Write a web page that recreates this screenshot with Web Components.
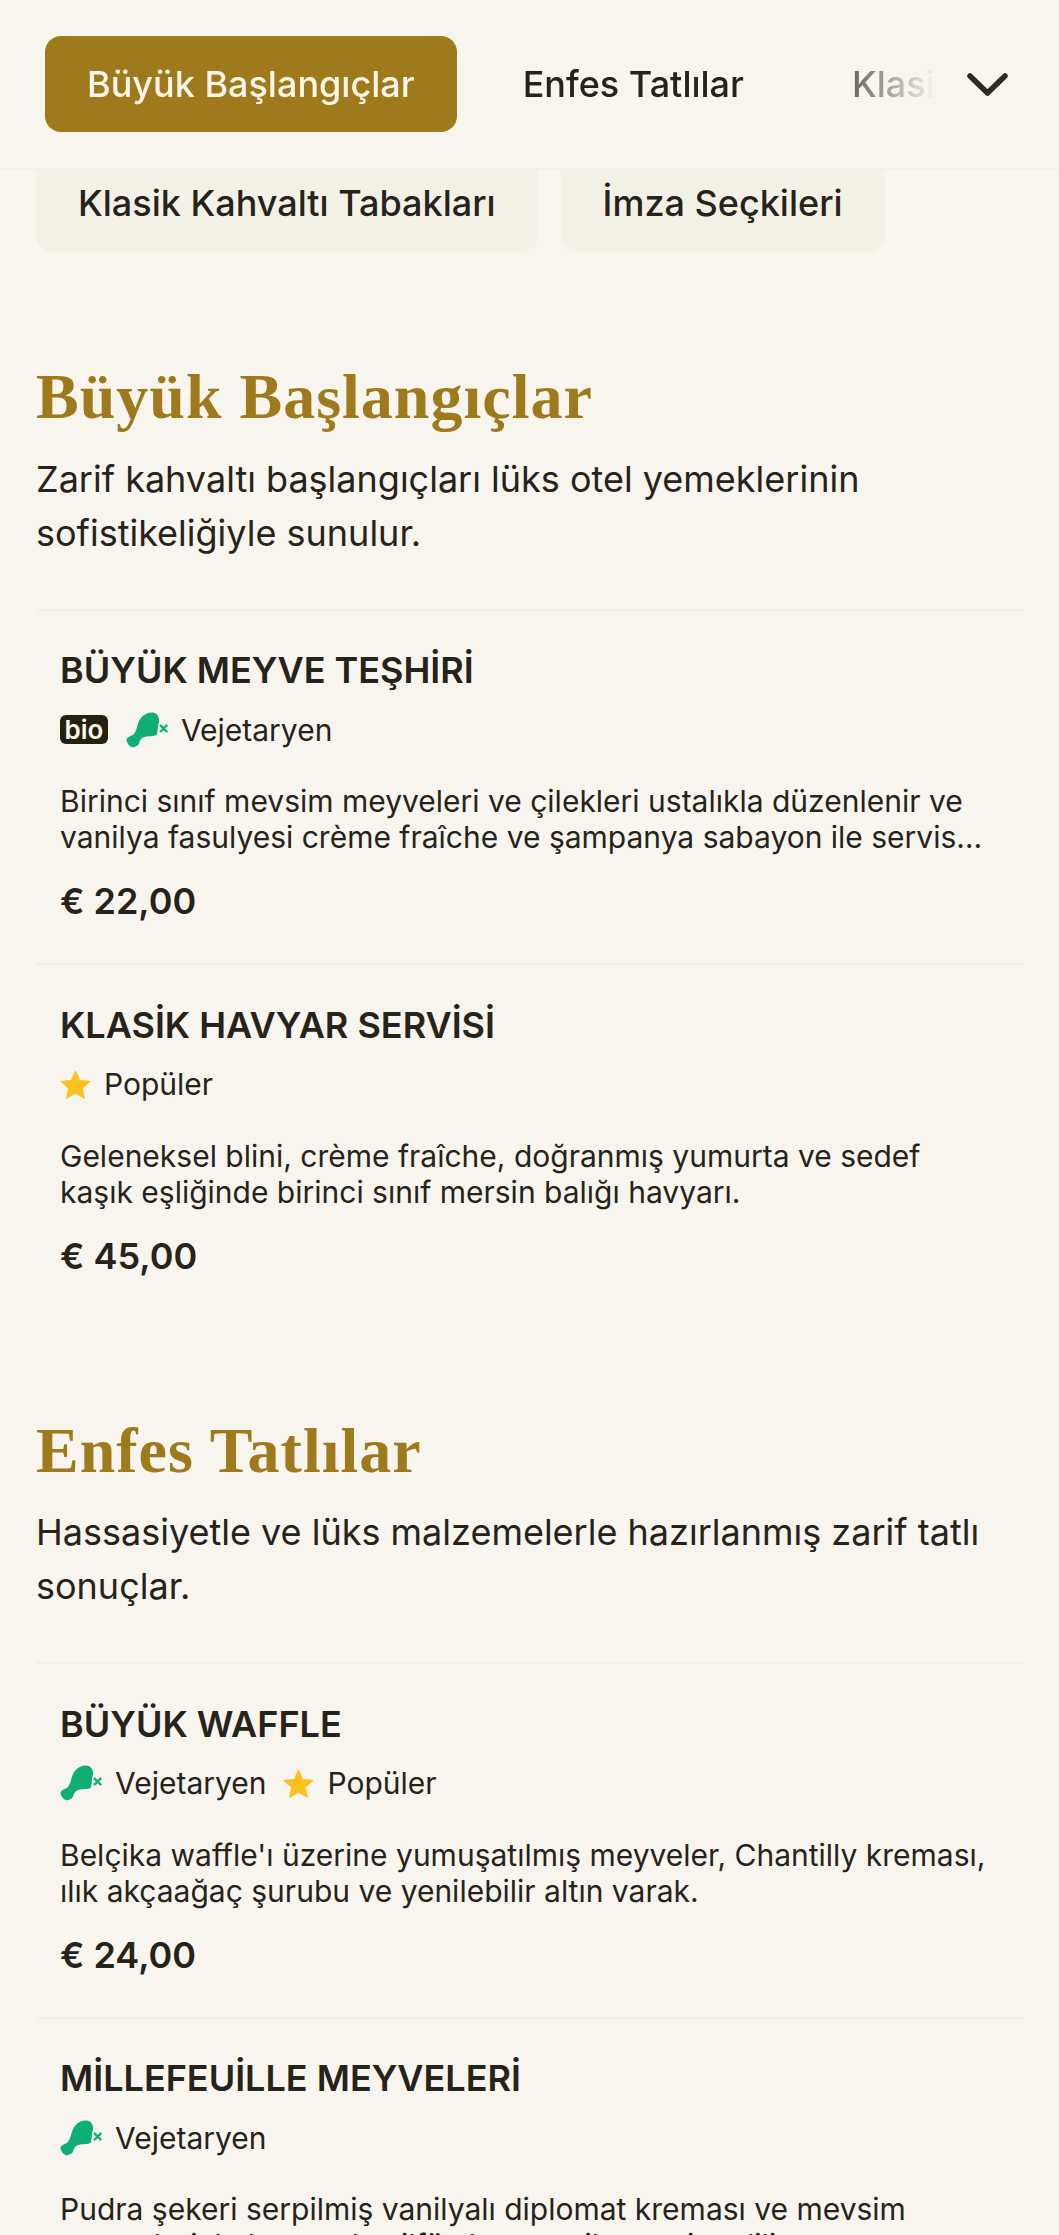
<!DOCTYPE html>
<html lang="tr"><head><meta charset="utf-8"><title>Menu</title>
<style>
html,body{margin:0;padding:0;background:#f8f5ee;}
body{font-family:Inter,"Noto Sans",sans-serif;color:#26231a;overflow-x:hidden;}
</style></head><body>
<menu-header>
  <menu-tab active>Büyük Başlangıçlar</menu-tab>
  <menu-tab>Enfes Tatlılar</menu-tab>
  <menu-tab>Klasik Kahvaltı Tabakları</menu-tab>
</menu-header>
<chip-row>
  <cat-chip>Klasik Kahvaltı Tabakları</cat-chip>
  <cat-chip>İmza Seçkileri</cat-chip>
</chip-row>
<menu-section heading="Büyük Başlangıçlar" intro="Zarif kahvaltı başlangıçları lüks otel yemeklerinin sofistikeliğiyle sunulur.">
  <menu-item name="BÜYÜK MEYVE TEŞHİRİ" price="€ 22,00" desc="Birinci sınıf mevsim meyveleri ve çilekleri ustalıkla düzenlenir ve vanilya fasulyesi crème fraîche ve şampanya sabayon ile servis edilir.">
    <item-tag kind="bio"></item-tag><item-tag kind="veg">Vejetaryen</item-tag>
  </menu-item>
  <menu-item name="KLASİK HAVYAR SERVİSİ" price="€ 45,00" desc="Geleneksel blini, crème fraîche, doğranmış yumurta ve sedef kaşık eşliğinde birinci sınıf mersin balığı havyarı.">
    <item-tag kind="star">Popüler</item-tag>
  </menu-item>
</menu-section>
<menu-section heading="Enfes Tatlılar" intro="Hassasiyetle ve lüks malzemelerle hazırlanmış zarif tatlı sonuçlar.">
  <menu-item name="BÜYÜK WAFFLE" price="€ 24,00" desc="Belçika waffle'ı üzerine yumuşatılmış meyveler, Chantilly kreması, ılık akçaağaç şurubu ve yenilebilir altın varak.">
    <item-tag kind="veg">Vejetaryen</item-tag><item-tag kind="star">Popüler</item-tag>
  </menu-item>
  <menu-item name="MİLLEFEUİLLE MEYVELERİ" price="€ 26,00" desc="Pudra şekeri serpilmiş vanilyalı diplomat kreması ve mevsim meyveleriyle katmanlı milföy hamuru ile servis edilir.">
    <item-tag kind="veg">Vejetaryen</item-tag>
  </menu-item>
</menu-section>
<script>
const def=(n,css,html)=>{customElements.define(n,class extends HTMLElement{
  connectedCallback(){ if(this.shadowRoot) return; const s=this.attachShadow({mode:'open'});
    s.innerHTML='<style>'+css+'</style>'+(typeof html==='function'?html(this):html); }
});};
def('menu-header',`:host{display:flex;align-items:center;position:sticky;top:0;z-index:5;background:#f8f5ee;border-bottom:2px solid #f2efe6;padding:36px 48px 36px 45px}
.tabs{display:flex;align-items:center;gap:24px;flex:1;min-width:0;overflow:hidden;-webkit-mask-image:linear-gradient(to right,#000 calc(100% - 137px),transparent calc(100% - 10px));mask-image:linear-gradient(to right,#000 calc(100% - 137px),transparent calc(100% - 10px))}
svg{flex:none;width:46px;height:46px;margin:4px 0 0 18px}
`,`<div class="tabs"><slot></slot></div><svg viewBox="0 0 46 46" fill="none" stroke="#2e2b20" stroke-width="5.5" stroke-linecap="round" stroke-linejoin="round"><path d="M5 13 L22.500 30 L40 13"/></svg>`);
def('menu-tab',`:host{display:block;flex:none;box-sizing:border-box;height:96px;line-height:96px;padding:0 42px;border-radius:16px;font-size:36px;font-weight:500;white-space:nowrap;color:#26231a}
:host([active]){background:#9f7a1c;color:#fbf6e9}`,`<slot></slot>`);
def('chip-row',`:host{display:flex;gap:23px;padding:0 36px;margin-top:-24px;}`,`<slot></slot>`);
def('cat-chip',`:host{display:flex;align-items:flex-end;height:106px;box-sizing:border-box;line-height:44px;padding:0 42px 27px;background:#f3f1e6;border-radius:16px;font-size:36px;font-weight:500;white-space:nowrap;color:#26231a}`,`<slot></slot>`);
def('menu-section',`:host{display:block;padding:0 36px;margin-top:109px}
h2{margin:0;font:700 64px/72px "Liberation Serif",serif;color:#9f7a1c;letter-spacing:1px}
p{margin:18.5px 0 49px;font-size:36px;line-height:54px;color:#26231a}
:host(:last-of-type){margin-top:97px}
`,e=>`<h2>${e.getAttribute('heading')}</h2><p>${e.getAttribute('intro')}</p><slot></slot>`);
def('menu-item',`:host{display:block;border-top:2px solid #f2efe6;padding:37.5px 24px 39px}
h3{margin:0;font-size:36px;font-weight:600;line-height:44px;color:#26231a}
.tags{display:flex;align-items:center;gap:17px;margin-top:15.5px;height:44px}
.d{margin:31.500px 0 0;font-size:30px;line-height:36px;display:-webkit-box;-webkit-box-orient:vertical;-webkit-line-clamp:2;overflow:hidden;color:#26231a}
.pr{margin-top:23px;font-size:36px;line-height:46px;font-weight:600;color:#26231a}`,
e=>`<h3>${e.getAttribute('name')}</h3><div class="tags"><slot></slot></div><div class="d">${e.getAttribute('desc')}</div><div class="pr">${e.getAttribute('price')}</div>`);
const LEG='<svg width="42" height="36" viewBox="0 0 43 36"><path fill="#0fae74" d="M27 0C31.500 .3 34 4 34 8.700C33.500 11 33 12 32.800 13.700C32.500 17 32.300 19.500 31.500 23C28 24.500 25 24 22 24.500C19 25 17.500 25.500 16 26.800C14.800 28 14.500 29 13.800 30.200C13.500 32 12.500 33.500 10.800 34.500C8.800 36 6.500 36 4.800 34.800C3.200 33.700 2.200 32.800 1.500 31C.3 29.500 0 28 1.200 26.500C2.500 24.500 4.500 24.500 7.300 22.800C9 21.500 10.200 18.500 11 16C12 12 13 8.500 15.500 5.500C18 2 22 0 27 0z"/><path stroke="#0fae74" stroke-width="2.400" stroke-linecap="round" fill="none" d="M35.500 13.500l6 6M41.500 13.500l-6 6"/></svg>';
const STAR='<svg width="31" height="31" viewBox="0 0 32 32"><path fill="#fcc11e" d="M16 1l4.700 10.300 11.300 1.200-8.400 7.600 2.300 11.100L16 25.600 6.100 31.200l2.300-11.100L0 12.500l11.300-1.200z"/></svg>';
def('item-tag',`:host{display:flex;align-items:center;gap:13px;font-size:30px;line-height:44px;color:#26231a}
:host([kind=bio]){margin-right:1px}
b{display:block;background:#26210f;color:#fbf8ee;border-radius:6px;font:600 26px/29px Inter,sans-serif;padding:0 4.500px}
svg{display:block;flex:none}`,e=>{const k=e.getAttribute('kind');return (k==='bio'?'<b>bio</b>':k==='veg'?LEG:STAR)+'<slot></slot>'});
</script>
</body></html>
